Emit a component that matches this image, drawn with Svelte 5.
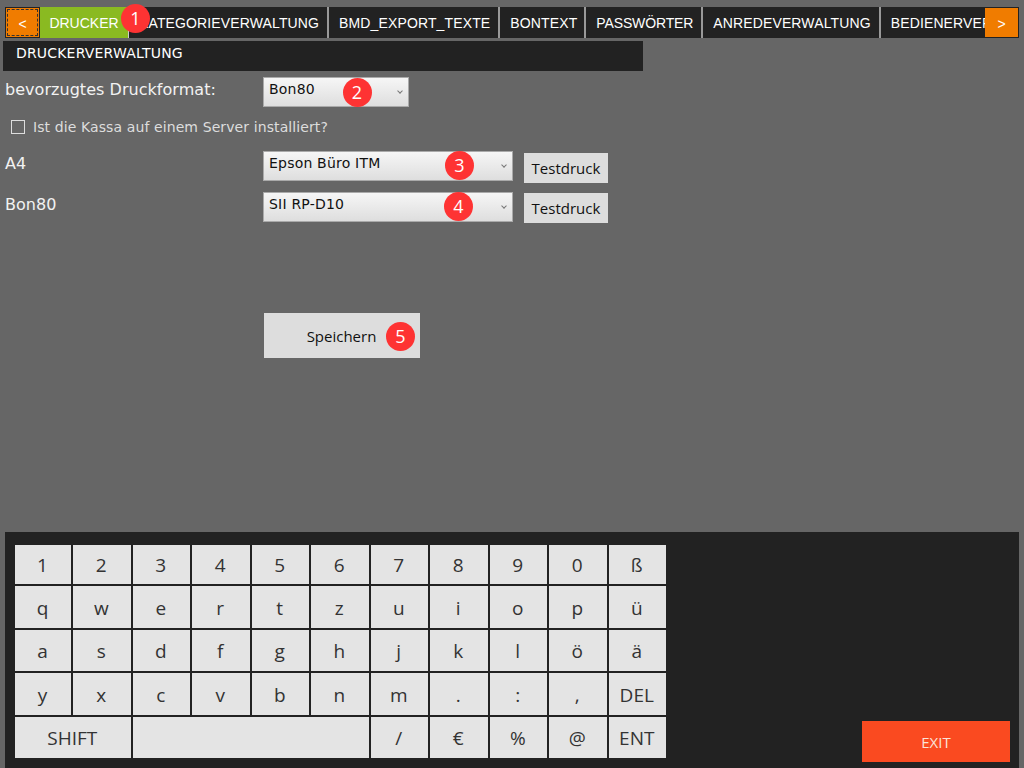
<script>
  const tabs = ['KATEGORIEVERWALTUNG', 'BMD_EXPORT_TEXTE', 'BONTEXT', 'PASSWÖRTER', 'ANREDEVERWALTUNG', 'BEDIENERVERWALTUNG'];
  const printers = [
    { label: 'A4', value: 'Epson Büro ITM' },
    { label: 'Bon80', value: 'SII RP-D10' }
  ];
  const rows = [
    ['1','2','3','4','5','6','7','8','9','0','ß'],
    ['q','w','e','r','t','z','u','i','o','p','ü'],
    ['a','s','d','f','g','h','j','k','l','ö','ä'],
    ['y','x','c','v','b','n','m','.',':',',','DEL']
  ];
  const bottom = [
    { t: 'SHIFT', s: 2 }, { t: '', s: 4 }, { t: '/', s: 1 }, { t: '€', s: 1 },
    { t: '%', s: 1 }, { t: '@', s: 1 }, { t: 'ENT', s: 1 }
  ];
  const badges = [
    { n: 1, x: 135.5, y: 18.5 }, { n: 2, x: 357, y: 92.5 }, { n: 3, x: 459.5, y: 165.5 },
    { n: 4, x: 458.5, y: 206.5 }, { n: 5, x: 400.5, y: 336.5 }
  ];
</script>

<div class="page">
  <nav class="tabbar">
    <button class="nav prev">&lt;</button>
    <button class="tab active">DRUCKER</button>
    <div class="scroller">
      {#each tabs as t}
        <button class="tab">{t}</button>
      {/each}
    </div>
    <button class="nav next">&gt;</button>
  </nav>

  <div class="heading">DRUCKERVERWALTUNG</div>

  <div class="format">
    <span class="label big">bevorzugtes Druckformat:</span>
    <div class="select short"><span>Bon80</span><i class="chev"></i></div>
  </div>

  <label class="check"><span class="box"></span>Ist die Kassa auf einem Server installiert?</label>

  <div class="printers">
    {#each printers as p}
      <div class="printer">
        <span class="label big">{p.label}</span>
        <div class="select"><span>{p.value}</span><i class="chev"></i></div>
        <button class="test">Testdruck</button>
      </div>
    {/each}
  </div>

  <button class="save">Speichern</button>

  <div class="spacer"></div>

  <footer class="panel">
    <div class="keys">
      {#each rows as r}
        {#each r as k}<button class="key">{k}</button>{/each}
      {/each}
      {#each bottom as b}
        <button class="key" style="grid-column: span {b.s}">{b.t}</button>
      {/each}
    </div>
    <button class="exit">EXIT</button>
  </footer>

  {#each badges as b}
    <span class="badge" style="left: {b.x - 14.5}px; top: {b.y - 14.5}px">{b.n}</span>
  {/each}
</div>

<style>
  :global(body) { margin: 0; background: #666; }
  .page {
    position: relative; width: 1024px; height: 768px; overflow: hidden;
    display: flex; flex-direction: column; background: #666;
    font-family: "DejaVu Sans", sans-serif; color: #fff;
  }
  button { font: inherit; border: 0; margin: 0; padding: 0; cursor: pointer; }

  .tabbar {
    margin: 7px 5px 0; height: 31px; display: flex; background: #222; flex: none;
    width: 1014px; box-sizing: border-box;
  }
  .nav {
    flex: none; background: #f07c00; color: #fff; font-size: 14px; font-family: "Liberation Sans", sans-serif;
  }
  .prev { width: 35px; border: 1px solid #222; outline: 1px dashed #333; outline-offset: -3px; padding-top: 2px; }
  .next { width: 33px; margin: 1px 1px 1px 0; padding-top: 2px; }
  .tab {
    flex: none; height: 31px; background: #222; color: #fff;
    font-family: "Liberation Sans", sans-serif; font-size: 14px; letter-spacing: 0.13px;
    padding: 0 8px 0 10px; border-right: 2px solid #999;
  }
  .tab.active { width: 89px; background: #8aba21; padding: 0; border-right: 1px solid #ccc; letter-spacing: 0; }
  .scroller .tab:nth-child(3) { padding-right: 7px; }
  .scroller .tab:nth-child(4) { letter-spacing: -0.13px; }
  .scroller { flex: 1; display: flex; overflow: hidden; min-width: 0; }

  .heading {
    flex: none; margin: 3px 0 0 3px; width: 640px; height: 30px; box-sizing: border-box;
    background: #222; padding: 3px 0 0 13px; font-size: 14px; line-height: 18px; letter-spacing: 0.18px;
  }

  .format { flex: none; display: flex; margin-top: 6px; height: 30px; }
  .label { width: 258px; padding-left: 5px; flex: none; }
  .big { font-size: 16px; line-height: 25px; color: #f2f2f2; letter-spacing: 0.04px; }
  .select {
    box-sizing: border-box; width: 250px; height: 30px; border: 1px solid #aaa; flex: none;
    background: linear-gradient(#f6f6f6, #dedede); color: #111;
    font-size: 14px; line-height: 20px; padding: 1px 0 0 5px; position: relative; letter-spacing: 0.2px;
  }
  .select.short { width: 146px; }
  .chev {
    position: absolute; right: 6px; top: 11px; width: 3px; height: 3px;
    border: solid #777; border-width: 0 1px 1px 0; transform: rotate(45deg);
  }
  .check {
    flex: none; display: flex; align-items: center; margin: 13px 0 0 11px; height: 14px;
    font-size: 14px; color: #ddd; letter-spacing: 0.1px;
  }
  .box { width: 12px; height: 12px; border: 1px solid #ddd; margin-right: 8px; }

  .printers { flex: none; margin-top: 17px; display: flex; flex-direction: column; gap: 11px; }
  .printer { display: flex; height: 30px; position: relative; }
  .test {
    flex: none; margin: 2px 0 0 11px; width: 84px; height: 30px; background: #ddd; color: #111;
    font-family: "Open Sans", sans-serif; font-size: 15px;
  }
  .printer:last-child .test { margin-top: 1px; }

  .save {
    flex: none; margin: 91px 0 0 264px; width: 156px; height: 45px; background: #ddd; color: #111;
    font-family: "Open Sans", sans-serif; font-size: 15px; padding-right: 1px;
  }
  .spacer { flex: 1; }

  .panel {
    flex: none; margin-left: 5px; width: 1014px; height: 236px; background: #222; position: relative;
    box-sizing: border-box; padding: 13px 0 0 10px;
  }
  .keys {
    width: 651px; display: grid; gap: 2px;
    grid-template-columns: 56px repeat(10, 57.5px);
    grid-template-rows: 39px 42px 41px 42px 41px;
  }
  .key {
    background: #e4e4e4; color: #333; font-family: "Open Sans", sans-serif; font-size: 19px; min-width: 0; padding: 1px 1px 0 0;
  }
  .exit {
    position: absolute; left: 857px; top: 189px; width: 148px; height: 41px;
    background: #fa4a20; color: #fbe3d8; font-family: "Open Sans", sans-serif; font-size: 15px;
  }
  .badge {
    position: absolute; width: 29px; height: 29px; border-radius: 50%; background: #fe3333;
    color: #fff; font-family: "Open Sans", sans-serif; font-size: 18px; line-height: 29px; text-align: center;
  }
</style>
